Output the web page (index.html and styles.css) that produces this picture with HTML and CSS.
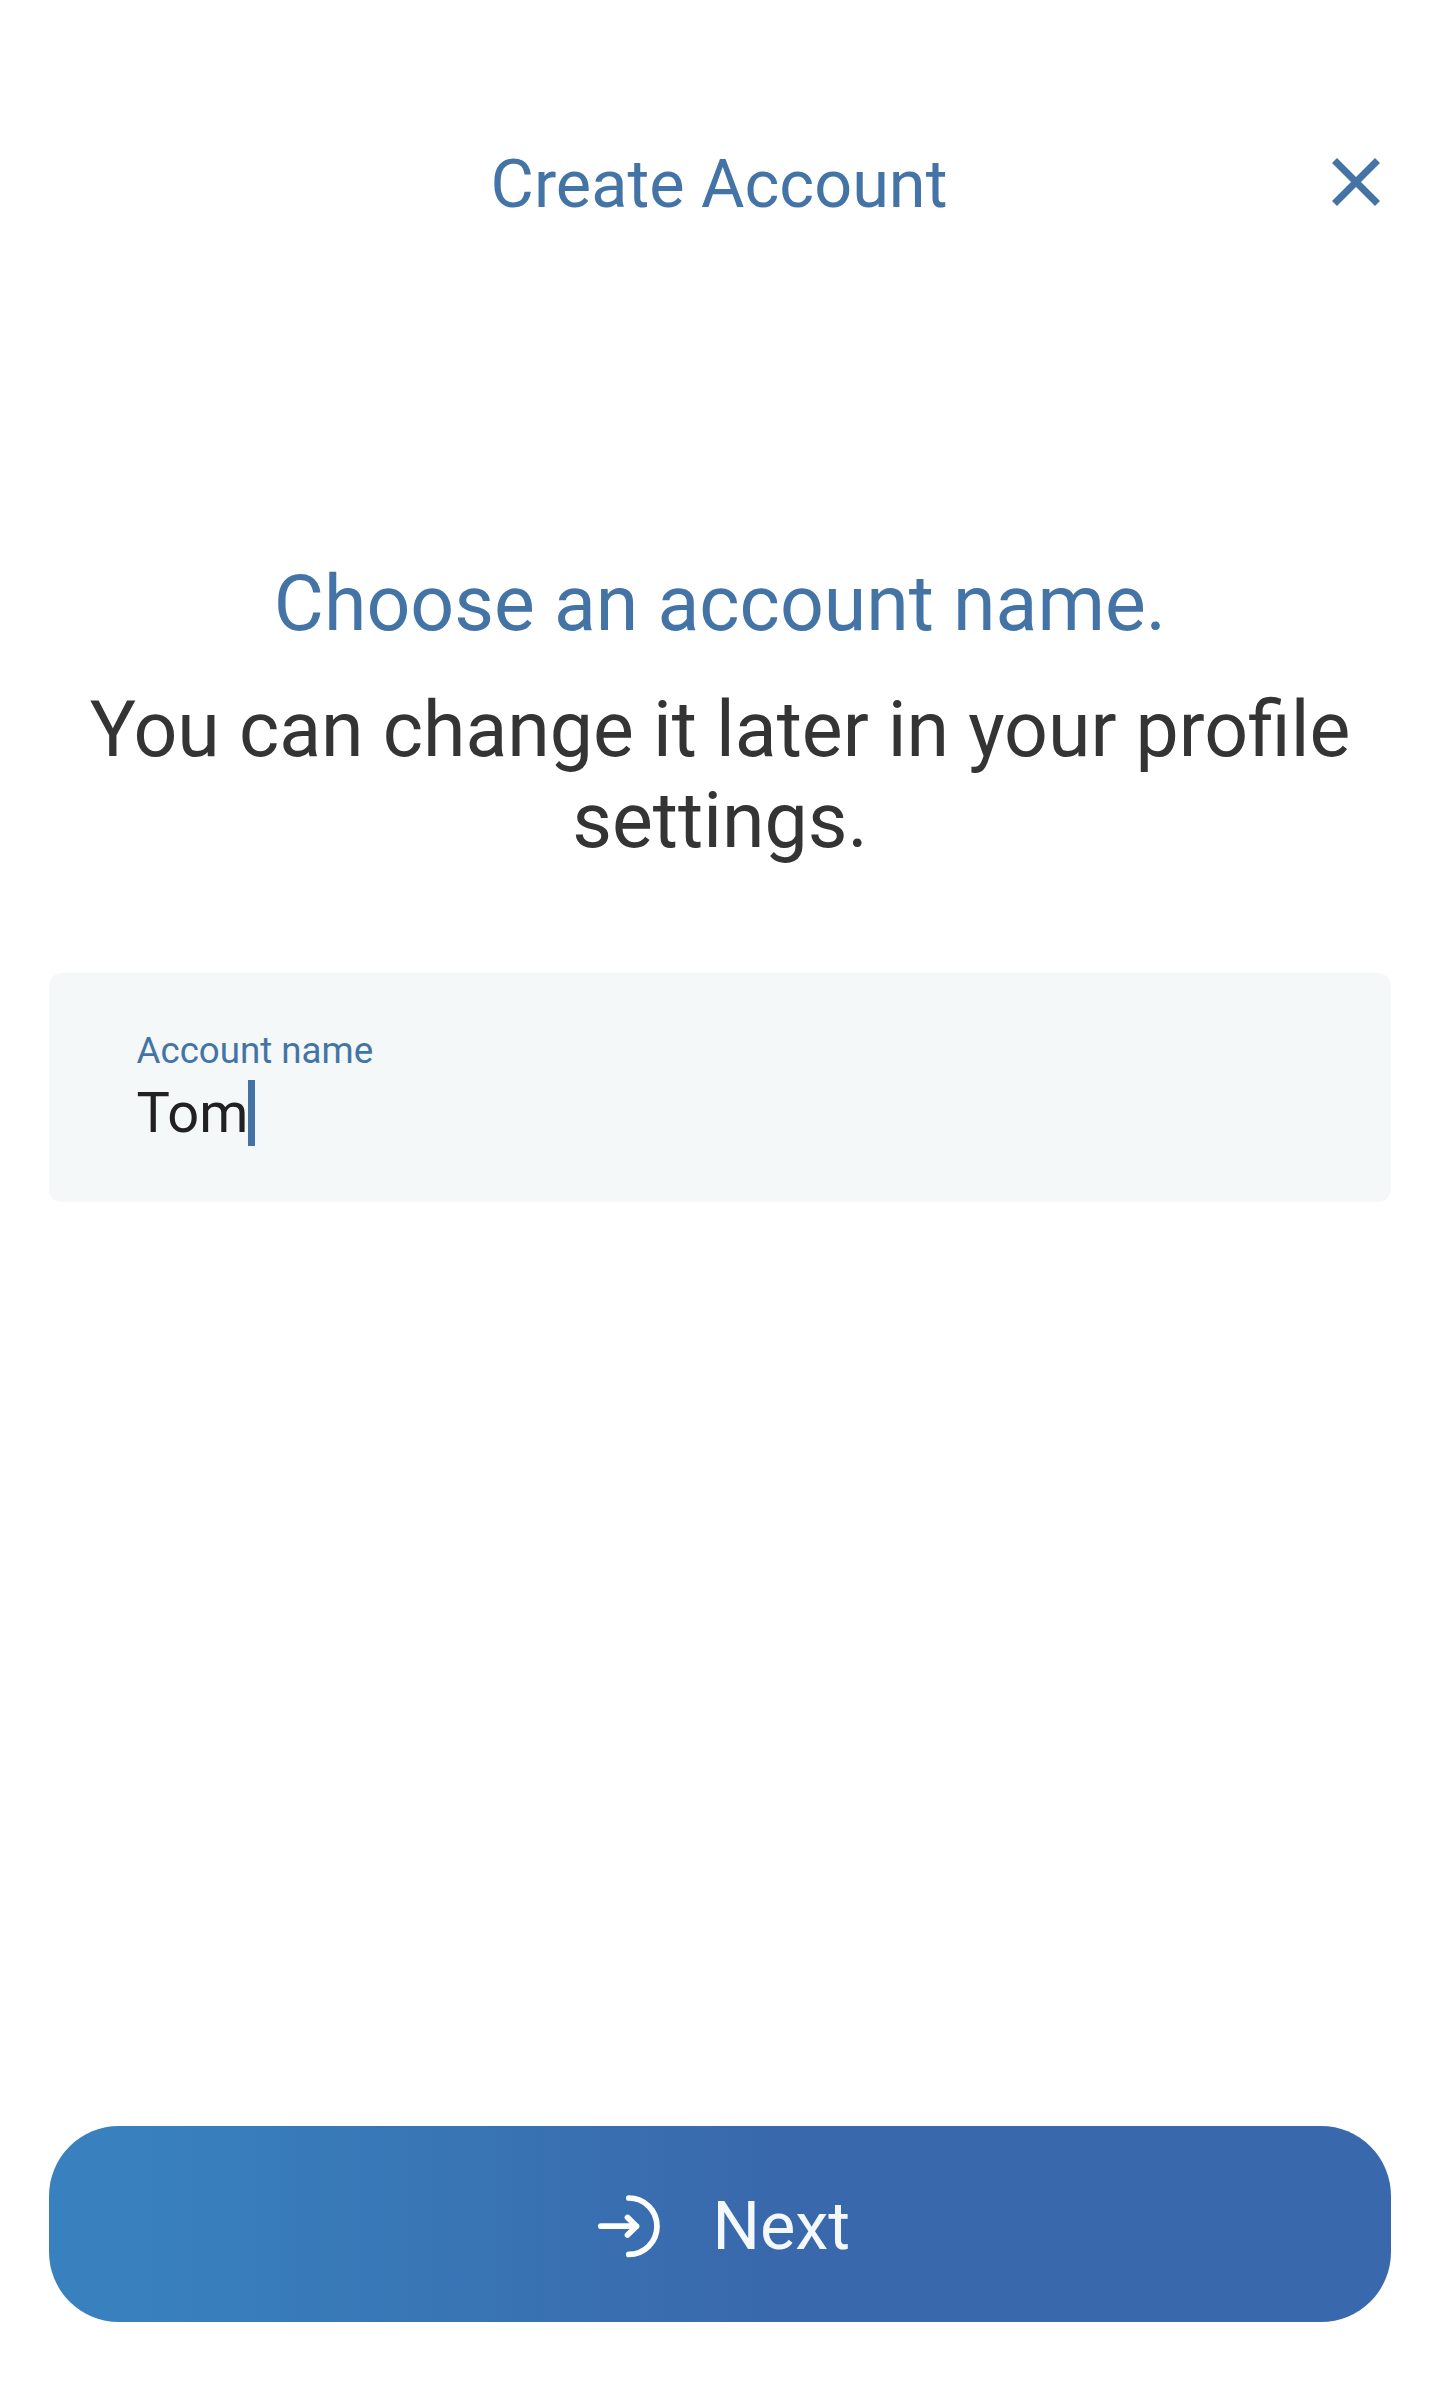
FILE: index.html
```html
<!DOCTYPE html>
<html lang="en">
<head>
<meta charset="utf-8">
<title>Create Account</title>
<link rel="stylesheet" href="styles.css">
</head>
<body>
<main class="screen">
  <header class="topbar">
    <h1 class="title">Create Account</h1>
    <button class="close" aria-label="Close"><svg width="50" height="50" viewBox="0 0 50 50"><path d="M3.5 3.5 46.5 46.5M46.5 3.5 3.5 46.5" stroke="#4474a6" stroke-width="7" fill="none"/></svg></button>
  </header>
  <section class="intro">
    <h2 class="heading">Choose an account name.</h2>
    <p class="hint">You can change it later in your profile settings.</p>
  </section>
  <div class="field">
    <span class="label">Account name</span>
    <div class="value">Tom<span class="caret"></span></div>
  </div>
  <button class="next">
    <svg class="enter" width="64" height="64" viewBox="0 0 64 64" fill="none" stroke="#fff" stroke-width="5.7" stroke-linecap="round" stroke-linejoin="round"><path d="M4.9 32.2H40.5M31.5 23.4 40.5 32.2 31.5 41M32.8 4A28.2 28.2 0 0 1 32.8 60.4"/></svg>
    <span>Next</span>
  </button>
</main>
</body>
</html>
```
FILE: styles.css
```css
* { box-sizing: border-box; }
body { margin: 0; background: #fff; font-family: Roboto, sans-serif; }
h1, h2, p { margin: 0; font-weight: 400; }
button { border: 0; padding: 0; background: none; font: inherit; }
svg { display: block; flex: none; }
.screen { height: 2392px; padding: 144px 49px 70px; display: flex; flex-direction: column; }
.topbar { height: 80px; display: grid; grid-template-columns: 100px 1fr 100px; align-items: center; color: #4474a6; }
.title { grid-column: 2; text-align: center; font-size: 66.6px; line-height: 78px; padding-right: 2px; }
.close { display: flex; justify-content: flex-end; padding: 0 10px 4px 0; }
.intro { margin-top: 334px; text-align: center; font-size: 77px; line-height: 92px; }
.heading { font-size: inherit; color: #4474a6; }
.hint { margin-top: 34.5px; line-height: 91px; color: #343434; }
.field { margin-top: 106.5px; height: 229px; border-radius: 13px; background: #f4f8f9; padding: 56px 87.5px; }
.label { display: block; color: #4474a6; font-size: 36.7px; line-height: 43px; }
.value { display: flex; align-items: center; font-size: 56px; line-height: 66px; margin-top: 8px; color: #212121; }
.caret { width: 7px; height: 66px; background: #4474a6; }
.next { margin-top: auto; height: 196px; border-radius: 70px; display: flex; align-items: center; justify-content: center; gap: 52.5px; padding: 4px 0 0 6px; color: #f4f8fa; font-size: 66.6px; line-height: 78px; background: linear-gradient(90deg, #3881be 6%, #3968ac 55%); }
```
